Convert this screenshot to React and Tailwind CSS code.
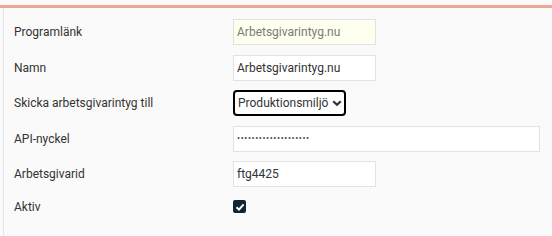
import React from 'react';

const FONT = { fontFamily: 'Roboto, "Liberation Sans", sans-serif' };

const Row = ({ label, h = 'h-[26px]', children }) => (
  <div className={`flex items-center ${h}`}>
    <div className="w-[219px] shrink-0 text-[12px] text-[#333]">{label}</div>
    {children}
  </div>
);

const baseCls = 'h-[26px] border border-[#e2e2e2] px-[3px] text-[12px] outline-none';

export default function App() {
  return (
    <div className="w-[552px] h-[236px] bg-[#fafafa] overflow-hidden" style={FONT}>
      <div className="h-[5px]" />
      <div className="h-[3px] bg-[#e8a998]" />
      <div className="ml-[3px] border-l border-[#e4e4e4] pl-[10px] pt-[11px] h-[228px] flex flex-col gap-[9.5px]">
        <Row label="Programlänk">
          <input
            readOnly
            value="Arbetsgivarintyg.nu"
            className={`${baseCls} w-[143px] bg-[#fffff0] text-[#7a7a7a]`}
          />
        </Row>
        <Row label="Namn">
          <input readOnly value="Arbetsgivarintyg.nu" className={`${baseCls} w-[143px] bg-white text-[#333]`} />
        </Row>
        <Row label="Skicka arbetsgivarintyg till">
          <div className="h-[26px] w-[113px] border-2 border-black rounded-[4px] bg-white flex items-center justify-between pl-[3px] pr-[2px] text-[12px] text-[#333]">
            <span>Produktionsmiljö</span>
            <svg width="10" height="10" viewBox="0 0 10 10">
              <path d="M1.2 3.2 L5 6.8 L8.8 3.2" fill="none" stroke="#333" strokeWidth="2.2" />
            </svg>
          </div>
        </Row>
        <Row label="API-nyckel">
          <div className={`${baseCls} w-[307px] bg-white flex items-center`}>
            <span className="text-[9px] tracking-[0.6px] text-[#444] leading-none">
              ••••••••••••••••••••
            </span>
          </div>
        </Row>
        <Row label="Arbetsgivarid">
          <input readOnly value="ftg4425" className={`${baseCls} w-[143px] bg-white text-[#333]`} />
        </Row>
        <Row label="Aktiv" h="h-[20px]">
          <span className="w-[13px] h-[13px] rounded-[2px] bg-[#0e2536] flex items-center justify-center">
            <svg width="10" height="10" viewBox="0 0 10 10">
              <path d="M1.5 5.2 L4 7.6 L8.6 2.4" fill="none" stroke="#fff" strokeWidth="2" />
            </svg>
          </span>
        </Row>
      </div>
    </div>
  );
}
